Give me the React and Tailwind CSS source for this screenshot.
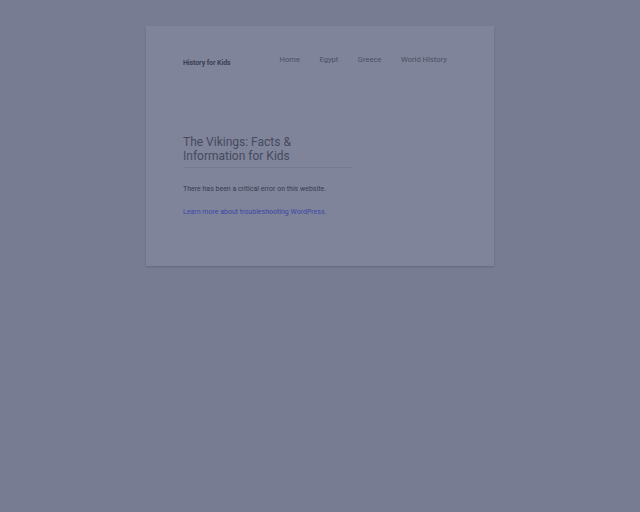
import React from 'react'

const navItems = ['Home', 'Egypt', 'Greece', 'World History']

const App = () => {
  return (
    <div className="min-h-[512px] w-full bg-[#787c92] pt-[26px]" style={{ fontFamily: 'Roboto, "Liberation Sans", sans-serif' }}>
      <div className="mx-auto w-[348px] h-[240px] bg-[#80849a] shadow-[0_1px_2px_rgba(60,64,85,0.35)] pl-[37px] pr-[30px]">
        <header className="flex items-start pt-[28px]">
          <div className="mt-[4px] text-[7px] font-bold text-[#3b3f54] tracking-[-0.1px] whitespace-nowrap">History for Kids</div>
          <nav className="ml-[49px] flex gap-[19.5px] text-[7.6px] text-[#4a4f63] whitespace-nowrap">
            {navItems.map((item) => (
              <span key={item}>{item}</span>
            ))}
          </nav>
        </header>

        <main className="mt-[66px] w-[169px]">
          <h1 className="text-[12px] leading-[14px] text-[#454a5f] pb-[4px] border-b border-[#767a90]">
            The Vikings: Facts &amp; Information for Kids
          </h1>
          <p className="mt-[16px] text-[7px] text-[#373b50] whitespace-nowrap">There has been a critical error on this website.</p>
          <p className="mt-[13px] text-[7px] text-[#3a46a6] whitespace-nowrap">Learn more about troubleshooting WordPress.</p>
        </main>
      </div>
    </div>
  )
}

export default App
